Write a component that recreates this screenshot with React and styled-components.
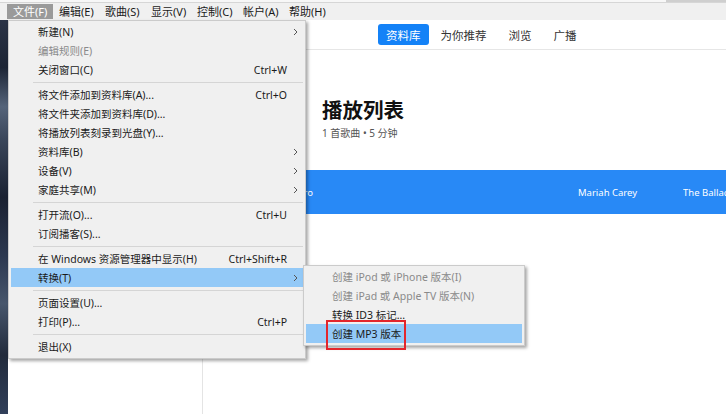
import React from 'react';
import styled, { createGlobalStyle } from 'styled-components';

const GlobalStyle = createGlobalStyle`
  html, body {
    margin: 0;
    padding: 0;
    background: #fff;
  }
  body {
    font-family: "Noto Sans", "Noto Sans CJK SC", sans-serif;
    color: #1a1a1a;
  }
`;

const Screen = styled.div`
  position: relative;
  width: 726px;
  height: 414px;
  overflow: hidden;
  display: flex;
  flex-direction: column;
  background: #fff;
`;

const TitleStrip = styled.div`
  height: 3px;
  display: flex;
  background: #f7f7f7;
  border-bottom: 1px solid #d6d6d6;
  box-sizing: border-box;
`;

const TitleStripRest = styled.div`
  margin-left: auto;
  width: 60px;
  background: #cfcfcf;
`;

const MenuBar = styled.div`
  height: 17px;
  display: flex;
  align-items: center;
  padding-left: 7px;
  background: #f0f0f0;
`;

const MenuBarItem = styled.div`
  width: 34px;
  height: 15px;
  display: flex;
  align-items: center;
  padding: 0 6px;
  font-size: 11px;
  line-height: 15px;
  color: ${(p) => (p.$open ? '#fff' : '#1a1a1a')};
  background: ${(p) => (p.$open ? '#9a9a9a' : 'transparent')};
  white-space: nowrap;
`;

const Body = styled.div`
  flex: 1;
  display: flex;
`;

const Desktop = styled.div`
  width: 8px;
  background: linear-gradient(
    180deg,
    #2a3346 0%,
    #1d2535 12%,
    #55647a 22%,
    #3b475b 30%,
    #1a2131 45%,
    #2c3850 60%,
    #47566c 72%,
    #222b3c 85%,
    #31405a 100%
  );
`;

const Window = styled.div`
  flex: 1;
  display: flex;
  flex-direction: column;
`;

const NavBar = styled.div`
  height: 29px;
  display: flex;
  align-items: center;
  gap: 10px;
  padding-left: 370px;
  border-bottom: 1px solid #e6e6e6;
  background: #fff;
`;

const NavTab = styled.div`
  height: 21px;
  display: flex;
  align-items: center;
  padding: 0 ${(p) => (p.$active ? '8px' : '2px')};
  margin-right: ${(p) => (p.$active ? '0' : '8px')};
  border-radius: 3px;
  font-size: 11.5px;
  color: ${(p) => (p.$active ? '#fff' : '#333')};
  background: ${(p) => (p.$active ? '#1482f7' : 'transparent')};
`;

const Main = styled.div`
  flex: 1;
  display: flex;
`;

const Sidebar = styled.div`
  width: 194px;
  border-right: 1px solid #e4e4e4;
  display: flex;
  flex-direction: column;
  padding-top: 272px;
`;

const SidebarRow = styled.div`
  height: 19px;
  background: ${(p) => (p.$selected ? '#dcdcdc' : 'transparent')};
`;

const Content = styled.div`
  flex: 1;
  display: flex;
  flex-direction: column;
`;

const Header = styled.div`
  padding: 48px 0 0 119px;
`;

const Title = styled.div`
  font-size: 20.5px;
  font-weight: 700;
  line-height: 25px;
  color: #111;
`;

const Subtitle = styled.div`
  margin-top: 3px;
  font-size: 10px;
  line-height: 14px;
  color: #555;
`;

const SongBand = styled.div`
  margin-top: 30px;
  height: 44px;
  display: grid;
  grid-template-columns: 287px 105px 1fr;
  align-items: center;
  padding-left: 88px;
  background: #2889f6;
  color: #fff;
  font-size: 9.5px;
  white-space: nowrap;
  overflow: hidden;
`;

const Cell = styled.div`
  overflow: hidden;
`;

const Menu = styled.div`
  position: absolute;
  left: ${(p) => p.$x}px;
  top: ${(p) => p.$y}px;
  width: ${(p) => p.$w}px;
  box-sizing: border-box;
  padding: 1px 2px 2px;
  background: #f0f0f0;
  border: 1px solid #cbcbcb;
  box-shadow: 2px 2px 3px rgba(0, 0, 0, 0.35);
  display: flex;
  flex-direction: column;
`;

const Item = styled.div`
  height: 19px;
  display: grid;
  grid-template-columns: 1fr auto 16px;
  align-items: center;
  padding-left: ${(p) => p.$indent}px;
  font-size: 10.5px;
  color: ${(p) => (p.$disabled ? '#8a8a8a' : '#1a1a1a')};
  background: ${(p) => (p.$active ? '#93c9f7' : 'transparent')};
  white-space: nowrap;
`;

const Shortcut = styled.span`
  text-align: right;
`;

const Arrow = styled.span`
  display: flex;
  justify-content: center;
`;

const Separator = styled.div`
  height: 6px;
  display: flex;
  align-items: center;
  padding-left: 22px;
  &::after {
    content: '';
    flex: 1;
    height: 1px;
    background: #d5d5d5;
  }
`;

const Callout = styled.div`
  position: absolute;
  left: 326px;
  top: 320px;
  width: 80px;
  height: 30px;
  box-sizing: border-box;
  border: 2px solid #e3262c;
`;

const Chevron = () => (
  <svg width="5" height="8" viewBox="0 0 5 8">
    <path d="M1 1 L4 4 L1 7" fill="none" stroke="#555" strokeWidth="1" />
  </svg>
);

const menuBar = ['文件(F)', '编辑(E)', '歌曲(S)', '显示(V)', '控制(C)', '帐户(A)', '帮助(H)'];

const fileMenu = [
  { label: '新建(N)', sub: true },
  { label: '编辑规则(E)', disabled: true },
  { label: '关闭窗口(C)', key: 'Ctrl+W' },
  '-',
  { label: '将文件添加到资料库(A)...', key: 'Ctrl+O' },
  { label: '将文件夹添加到资料库(D)...' },
  { label: '将播放列表刻录到光盘(Y)...' },
  { label: '资料库(B)', sub: true },
  { label: '设备(V)', sub: true },
  { label: '家庭共享(M)', sub: true },
  '-',
  { label: '打开流(O)...', key: 'Ctrl+U' },
  { label: '订阅播客(S)...' },
  '-',
  { label: '在 Windows 资源管理器中显示(H)', key: 'Ctrl+Shift+R' },
  { label: '转换(T)', sub: true, active: true },
  '-',
  { label: '页面设置(U)...' },
  { label: '打印(P)...', key: 'Ctrl+P' },
  '-',
  { label: '退出(X)' },
];

const convertMenu = [
  { label: '创建 iPod 或 iPhone 版本(I)', disabled: true },
  { label: '创建 iPad 或 Apple TV 版本(N)', disabled: true },
  { label: '转换 ID3 标记...' },
  { label: '创建 MP3 版本', active: true },
];

function MenuList({ items, indent }) {
  return items.map((it, i) =>
    it === '-' ? (
      <Separator key={i} />
    ) : (
      <Item key={i} $indent={indent} $disabled={it.disabled} $active={it.active}>
        <span>{it.label}</span>
        <Shortcut>{it.key}</Shortcut>
        <Arrow>{it.sub && <Chevron />}</Arrow>
      </Item>
    )
  );
}

export default function App() {
  return (
    <Screen>
      <GlobalStyle />
      <TitleStrip>
        <TitleStripRest />
      </TitleStrip>
      <MenuBar>
        {menuBar.map((m, i) => (
          <MenuBarItem key={m} $open={i === 0}>
            {m}
          </MenuBarItem>
        ))}
      </MenuBar>
      <Body>
        <Desktop />
        <Window>
          <NavBar>
            <NavTab $active>资料库</NavTab>
            <NavTab>为你推荐</NavTab>
            <NavTab>浏览</NavTab>
            <NavTab>广播</NavTab>
          </NavBar>
          <Main>
            <Sidebar>
              <SidebarRow $selected />
            </Sidebar>
            <Content>
              <Header>
                <Title>播放列表</Title>
                <Subtitle>1 首歌曲 • 5 分钟</Subtitle>
              </Header>
              <SongBand>
                <Cell>Hero</Cell>
                <Cell>Mariah Carey</Cell>
                <Cell>The Ballads</Cell>
              </SongBand>
            </Content>
          </Main>
        </Window>
      </Body>

      <Menu $x={8} $y={20} $w={298}>
        <MenuList items={fileMenu} indent={27} />
      </Menu>
      <Menu $x={303} $y={265} $w={222}>
        <MenuList items={convertMenu} indent={26} />
      </Menu>
      <Callout />
    </Screen>
  );
}
